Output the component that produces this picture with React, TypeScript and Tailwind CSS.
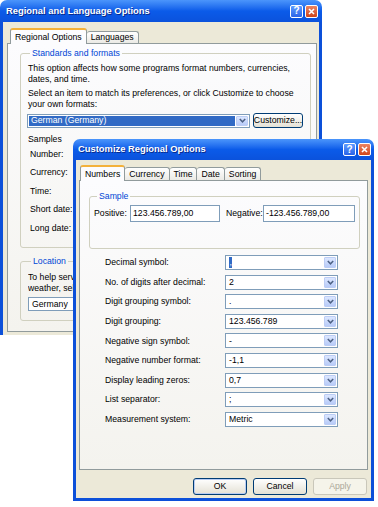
import React from 'react';

// Windows XP "Luna" look, scaled down to the screenshot's size
const txt = 'text-[8.7px] leading-[10.5px]';

function Chevron() {
  return (
    <svg width="7" height="5" viewBox="0 0 7 5">
      <path d="M0.8 1 L3.5 3.8 L6.2 1" fill="none" stroke="#4d6185" strokeWidth="1.5" />
    </svg>
  );
}

function TitleButtons() {
  return (
    <div className="flex items-center gap-[2px]">
      <div className="w-[13px] h-[13px] rounded-[2px] border border-white bg-linear-to-b from-[#5f9bff] to-[#2a63e8] flex items-center justify-center text-white font-bold text-[10px] leading-none">
        ?
      </div>
      <div className="w-[13px] h-[13px] rounded-[2px] border border-white bg-linear-to-b from-[#ec8461] to-[#cf4417] flex items-center justify-center">
        <svg width="7" height="7" viewBox="0 0 7 7">
          <path d="M1 1 L6 6 M6 1 L1 6" stroke="white" strokeWidth="1.6" />
        </svg>
      </div>
    </div>
  );
}

function TitleBar({ title, className }: { title: string; className: string }) {
  return (
    <div
      className={
        'flex items-center justify-between rounded-t-[7px] bg-linear-to-b from-[#4b95fb] via-[#0b5be9] to-[#0b52dc] ' +
        className
      }
    >
      <span className="text-white font-bold text-[9.4px] [text-shadow:1px_1px_0_#0a2a8a]">{title}</span>
      <TitleButtons />
    </div>
  );
}

function Combo({
  value,
  className,
  highlight,
  selChar,
}: {
  value?: string;
  className: string;
  highlight?: boolean;
  selChar?: string;
}) {
  return (
    <div className={'flex items-stretch bg-white border border-[#7f9db9] p-[1px] ' + className}>
      <div className={'flex-1 flex items-center pl-[2px] ' + (highlight ? 'bg-[#316ac5] text-white mr-[1px]' : '')}>
        {selChar ? <span className="bg-[#316ac5] text-white px-[0.5px]">{selChar}</span> : value}
      </div>
      <div className="w-[12px] rounded-[1px] border border-[#bccdf5] bg-linear-to-b from-[#dce7ff] to-[#b8cbf8] flex items-center justify-center">
        <Chevron />
      </div>
    </div>
  );
}

function Button({
  label,
  className,
  disabled,
  focus,
}: {
  label: string;
  className: string;
  disabled?: boolean;
  focus?: boolean;
}) {
  if (disabled)
    return (
      <div className={'flex items-center justify-center rounded-[3px] border border-[#c9c7ba] bg-[#f5f4ea] text-[#aca899] ' + className}>
        {label}
      </div>
    );
  return (
    <div
      className={
        'flex items-center justify-center rounded-[3px] border border-[#003c74] bg-linear-to-b from-white to-[#e4e1d5] ' +
        (focus ? 'shadow-[inset_0_0_0_1px_#b9cdf3] ' : '') +
        className
      }
    >
      {label}
    </div>
  );
}

function Legend({ children }: { children: React.ReactNode }) {
  return <legend className="ml-[3px] px-[2px] text-[#0046d5] leading-[11px]">{children}</legend>;
}

function RegionalDialog() {
  return (
    <div className="w-[322px] h-[335px] flex flex-col overflow-hidden">
      <TitleBar title="Regional and Language Options" className="h-[22px] pl-[6px] pr-[4px]" />
      <div className="flex-1 bg-[#ece9d8] border-x-[3px] border-[#0c50d9] px-[4px] pt-[6px]">
        <div className="flex items-end h-[15px] pl-[3px]">
          <div className="relative z-10 h-[16px] -mb-px px-[4px] flex items-center bg-[#fcfcfe] border border-[#919b9c] border-b-0 border-t-[2px] border-t-[#f3b13a] rounded-t-[3px]">
            Regional Options
          </div>
          <div className="h-[12px] px-[4px] flex items-center bg-linear-to-b from-white to-[#ebeae5] border border-[#919b9c] border-b-0 border-l-0 rounded-t-[3px]">
            Languages
          </div>
        </div>
        <div className="h-[289px] w-[310px] border border-[#919b9c] bg-linear-to-b from-[#fcfcfe] to-[#f4f3ee] pl-[12px]">
          <fieldset className="mt-[4px] w-[291px] border border-[#d0d0bf] rounded-[3px] pl-[6px] pr-[7px] pt-[4px] pb-[10px]">
            <Legend>Standards and formats</Legend>
            <p className="pl-[1px]">
              This option affects how some programs format numbers, currencies,
              <br />
              dates, and time.
            </p>
            <p className="mt-[4px] pl-[1px]">
              Select an item to match its preferences, or click Customize to choose
              <br />
              your own formats:
            </p>
            <div className="mt-[4px] flex items-center gap-[3px]">
              <Combo value="German (Germany)" highlight className="w-[223px] h-[14px]" />
              <Button label="Customize..." className="w-[50px] h-[15px]" />
            </div>
            <div className="mt-[6px] pl-[1px]">Samples</div>
            <div className="pl-[3px]">
              {['Number:', 'Currency:', 'Time:', 'Short date:', 'Long date:'].map((l) => (
                <div key={l} className="h-[18.6px] flex items-center">
                  {l}
                </div>
              ))}
            </div>
          </fieldset>
          <fieldset className="mt-[8px] w-[291px] border border-[#d0d0bf] rounded-[3px] pl-[7px] pr-[7px] pt-[5px] pb-[9px]">
            <Legend>Location</Legend>
            {/* the rest of this text sits under the second window */}
            <p className="w-[45px] overflow-hidden whitespace-nowrap">
              To help services provide you with local information, such as news and
              <br />
              weather, select your present location:
            </p>
            <Combo value="Germany" className="mt-[4px] w-[160px] h-[14px]" />
          </fieldset>
        </div>
      </div>
    </div>
  );
}

const rows: { label: string; value?: string; sel?: string }[] = [
  { label: 'Decimal symbol:', sel: ',' },
  { label: 'No. of digits after decimal:', value: '2' },
  { label: 'Digit grouping symbol:', value: '.' },
  { label: 'Digit grouping:', value: '123.456.789' },
  { label: 'Negative sign symbol:', value: '-' },
  { label: 'Negative number format:', value: '-1,1' },
  { label: 'Display leading zeros:', value: '0,7' },
  { label: 'List separator:', value: ';' },
  { label: 'Measurement system:', value: 'Metric' },
];

function CustomizeDialog() {
  const tabs = ['Currency', 'Time', 'Date', 'Sorting'];
  return (
    <div className="absolute left-[73px] top-[139px] w-[301px] h-[362px] flex flex-col">
      <TitleBar title="Customize Regional Options" className="h-[21px] pl-[5px] pr-[3px]" />
      <div className="flex-1 bg-[#ece9d8] border-x-[3px] border-b-[3px] border-[#0c50d9] px-[3px] pt-[5px] pb-[3px]">
        <div className="flex items-end h-[15px] pl-[1px]">
          <div className="relative z-10 h-[16px] -mb-px px-[4px] flex items-center bg-[#fcfcfe] border border-[#919b9c] border-b-0 border-t-[2px] border-t-[#f3b13a] rounded-t-[3px]">
            Numbers
          </div>
          {tabs.map((t) => (
            <div
              key={t}
              className="h-[13px] px-[4px] flex items-center bg-linear-to-b from-white to-[#ebeae5] border border-[#919b9c] border-b-0 border-l-0 rounded-t-[3px]"
            >
              {t}
            </div>
          ))}
        </div>
        <div className="h-[290px] border border-[#919b9c] bg-linear-to-b from-[#fcfcfe] to-[#f4f3ee]">
          <fieldset className="mt-[9.5px] ml-[9px] w-[271px] border border-[#d0d0bf] rounded-[3px] pl-[4px] pt-[3px] pb-[26px]">
            <Legend>Sample</Legend>
            <div className="flex items-center">
              <span className="w-[36px]">Positive:</span>
              <div className="w-[90px] h-[17px] border border-[#7f9db9] bg-white flex items-center pl-[2px]">
                123.456.789,00
              </div>
              <span className="ml-[6px] w-[37px]">Negative:</span>
              <div className="w-[92px] h-[17px] border border-[#7f9db9] bg-white flex items-center pl-[2px]">
                -123.456.789,00
              </div>
            </div>
          </fieldset>
          <div className="mt-[6.5px] pl-[25px] flex flex-col gap-[4.6px]">
            {rows.map((r) => (
              <div key={r.label} className="flex items-center h-[15px]">
                <span className="w-[120px]">{r.label}</span>
                <Combo value={r.value} selChar={r.sel} className="w-[113px] h-[15px]" />
              </div>
            ))}
          </div>
        </div>
        <div className="mt-[8px] flex justify-end gap-[6px] pr-[1px]">
          <Button label="OK" focus className="w-[54px] h-[17px]" />
          <Button label="Cancel" className="w-[54px] h-[17px]" />
          <Button label="Apply" disabled className="w-[54px] h-[17px]" />
        </div>
      </div>
    </div>
  );
}

export default function App() {
  return (
    <div className={"relative w-[378px] h-[507px] bg-white overflow-hidden text-black font-['Liberation_Sans',Arial,sans-serif] " + txt}>
      <RegionalDialog />
      <CustomizeDialog />
    </div>
  );
}
